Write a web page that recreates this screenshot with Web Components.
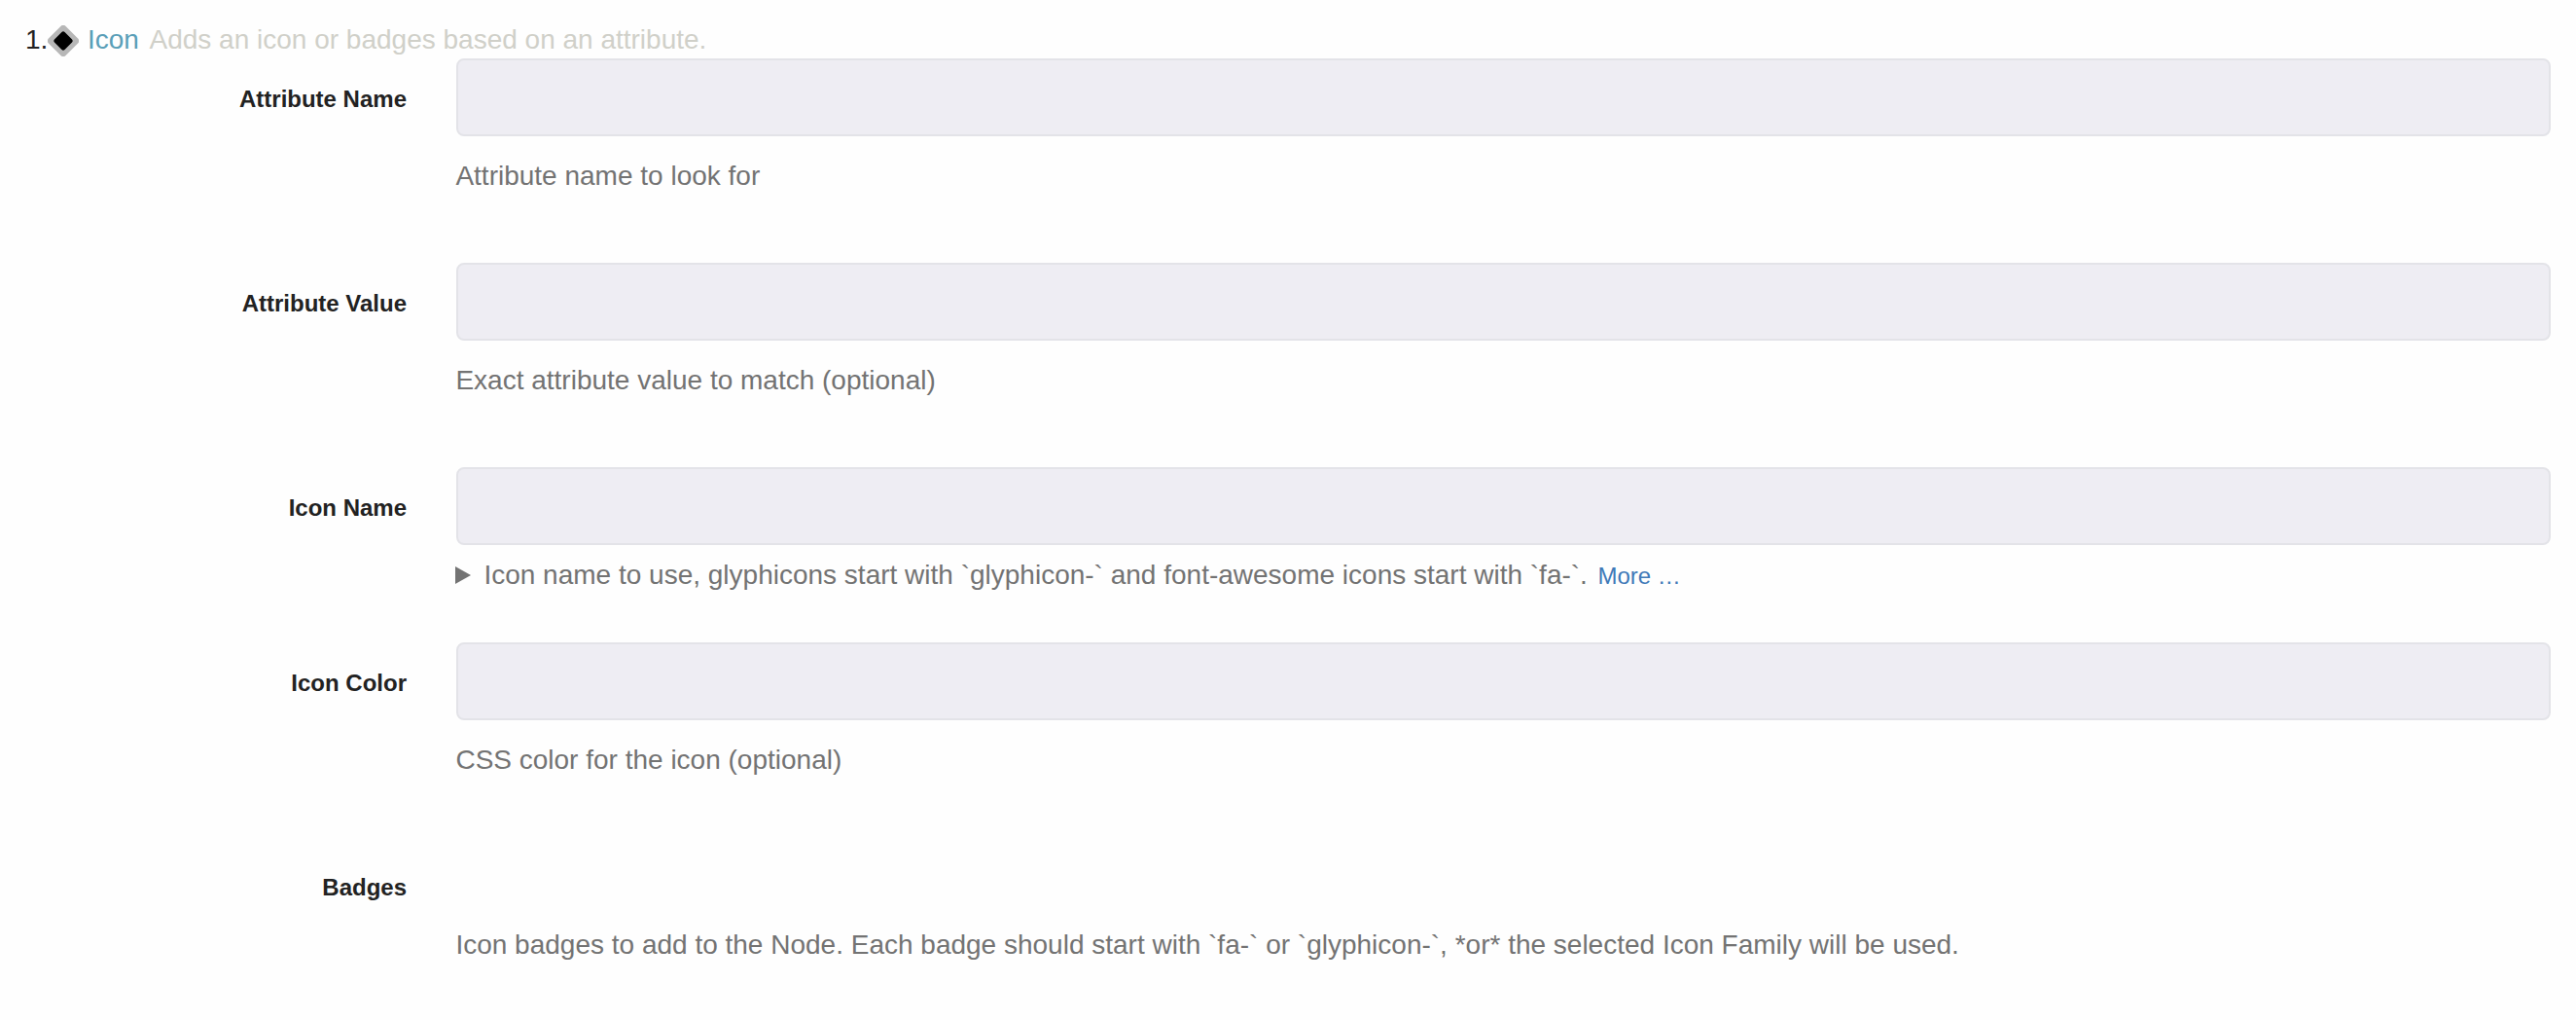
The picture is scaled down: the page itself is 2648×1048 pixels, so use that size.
<!DOCTYPE html>
<html lang="en">
<head>
<meta charset="utf-8">
<title>Icon</title>
<style>
body { margin: 0; background: #fefefe; font-family: "Liberation Sans", Arial, sans-serif; font-size: 28px; color: #222; }
</style>
</head>
<body>
<plugin-config>
  <plugin-header slot="header" index="1." name="Icon">Adds an icon or badges based on an attribute.</plugin-header>
  <form-row label="Attribute Name"><text-field slot="field"></text-field><help-text>Attribute name to look for</help-text></form-row>
  <form-row label="Attribute Value"><text-field slot="field"></text-field><help-text>Exact attribute value to match (optional)</help-text></form-row>
  <form-row label="Icon Name" compact><text-field slot="field"></text-field><help-disclosure>Icon name to use, glyphicons start with `glyphicon-` and font-awesome icons start with `fa-`.</help-disclosure></form-row>
  <form-row label="Icon Color"><text-field slot="field"></text-field><help-text>CSS color for the icon (optional)</help-text></form-row>
  <form-row label="Badges" bare><help-text>Icon badges to add to the Node. Each badge should start with `fa-` or `glyphicon-`, *or* the selected Icon Family will be used.</help-text></form-row>
</plugin-config>
<script>
class Base extends HTMLElement {
  constructor() {
    super();
    this.attachShadow({ mode: "open" });
  }
  connectedCallback() {
    this.shadowRoot.innerHTML = this.template();
  }
}

customElements.define("plugin-config", class extends Base {
  template() {
    return `<style>:host{display:flex;flex-direction:column;padding:20px 26px 0 26px}</style>
      <slot name="header"></slot><slot></slot>`;
  }
});

customElements.define("plugin-header", class extends Base {
  template() {
    return `<style>
      :host{display:flex;align-items:flex-start;height:40px;line-height:41px;white-space:pre}
      .num{width:23px}
      svg{display:block;width:32px;height:32px;margin:6px 9px 0 0}
      .name{color:#5a9fb8;width:63.5px}
      .desc{color:#d0d0c9}
    </style>
    <span class="num">${this.getAttribute("index")}</span>
    <svg viewBox="0 0 32 32" aria-hidden="true">
      <rect x="3.5" y="3.5" width="25" height="25" rx="4" fill="#b7b7b7" transform="rotate(45 16 16)"/>
      <rect x="8.5" y="8.5" width="15" height="15" rx="2.2" fill="#000" transform="rotate(45 16 16)"/>
    </svg>
    <span class="name">${this.getAttribute("name")}</span>
    <span class="desc"><slot></slot></span>`;
  }
});

customElements.define("form-row", class extends Base {
  template() {
    return `<style>
      :host{display:grid;grid-template-columns:392px minmax(0,1fr);column-gap:51px;height:210px}
      :host([compact]){height:180px}
      .label{text-align:right;font-weight:700;font-size:24px;line-height:37px;padding-top:23px}
      .col{display:flex;flex-direction:column;gap:20px}
      :host([compact]) .col{gap:10px}
      :host([bare]) .col{padding-top:80px}
    </style>
    <div class="label">${this.getAttribute("label")}</div>
    <div class="col"><slot name="field"></slot><slot></slot></div>`;
  }
});

customElements.define("text-field", class extends Base {
  template() {
    return `<style>
      :host{display:block}
      input{display:block;box-sizing:border-box;width:100%;height:80px;margin:0;padding:0 16px;border:2px solid #e3e3e8;border-radius:8px;background:#eeedf3;font:inherit;color:inherit;outline:0}
    </style><input type="text">`;
  }
});

customElements.define("help-text", class extends Base {
  template() {
    return `<style>:host{display:block;margin-left:-.6px;line-height:41px;color:#737373;white-space:nowrap}</style><slot></slot>`;
  }
});

customElements.define("help-disclosure", class extends Base {
  template() {
    return `<style>
      :host{display:flex;align-items:baseline;margin-left:-.6px;line-height:41px;color:#737373;white-space:nowrap}
      svg{width:16px;height:18px;margin-right:13px}
      .more{font-size:24px;color:#4079b8;margin-left:10.6px}
    </style>
    <svg viewBox="0 0 16 18" aria-hidden="true"><path d="M0 0L16 9L0 18Z" fill="#737373"/></svg>
    <span><slot></slot></span><span class="more">More …</span>`;
  }
});
</script>
</body>
</html>
